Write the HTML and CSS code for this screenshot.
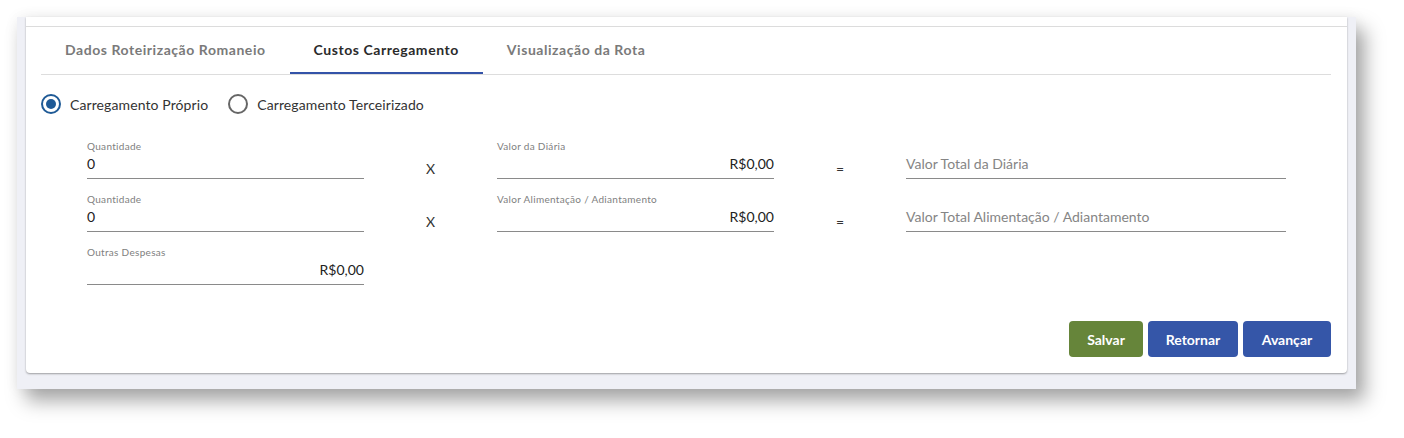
FILE: index.html
```html
<!DOCTYPE html>
<html lang="pt-BR">
<head>
  <meta charset="UTF-8" />
  <title>Custos Carregamento</title>
  <link rel="stylesheet" href="styles.css">
</head>
<body>
  <div class="frame">
    <div class="card">
      <nav class="tabs">
        <a class="tab">Dados Roteirização Romaneio</a>
        <a class="tab active">Custos Carregamento</a>
        <a class="tab">Visualização da Rota</a>
      </nav>

      <div class="radios">
        <label class="radio checked"><span class="dot"></span>Carregamento Próprio</label>
        <label class="radio"><span class="dot"></span>Carregamento Terceirizado</label>
      </div>

      <div class="costs">
        <div class="field">
          <span class="label">Quantidade</span>
          <span class="value">0</span>
        </div>
        <span class="op">X</span>
        <div class="field">
          <span class="label">Valor da Diária</span>
          <span class="value money">R$0,00</span>
        </div>
        <span class="op">=</span>
        <div class="field">
          <span class="label"></span>
          <span class="value placeholder">Valor Total da Diária</span>
        </div>

        <div class="field">
          <span class="label">Quantidade</span>
          <span class="value">0</span>
        </div>
        <span class="op">X</span>
        <div class="field">
          <span class="label">Valor Alimentação / Adiantamento</span>
          <span class="value money">R$0,00</span>
        </div>
        <span class="op">=</span>
        <div class="field">
          <span class="label"></span>
          <span class="value placeholder">Valor Total Alimentação / Adiantamento</span>
        </div>

        <div class="field">
          <span class="label">Outras Despesas</span>
          <span class="value money">R$0,00</span>
        </div>
      </div>

      <div class="actions">
        <button class="btn save">Salvar</button>
        <button class="btn back">Retornar</button>
        <button class="btn">Avançar</button>
      </div>
    </div>
  </div>
</body>
</html>
```

FILE: styles.css
```css
* {
  margin: 0;
  padding: 0;
  box-sizing: border-box;
}
body {
  font-family: Lato, "Open Sans", sans-serif;
  background: #fff;
  color: #333;
  padding: 17px 48px 40px 17px;
}

/* outer window */
.frame {
  width: 1339px;
  background: #eff0f6;
  padding: 0 9px 16px 9px;
  box-shadow: 9px 12px 18px rgba(0,0,0,0.34), 0 0 14px rgba(0,0,0,0.06);
}
.card {
  background: #fff;
  padding: 9px 16px 16px 15px;
  border-radius: 0 0 4px 4px;
  box-shadow: 0 1px 2px rgba(0,0,0,0.35);
}
.card::before {
  content: "";
  display: block;
  height: 1px;
  background: #dcdcdc;
  margin: 0 -16px 0 -15px;
}

/* tabs */
.tabs {
  display: flex;
  border-bottom: 1px solid #ddd;
}
.tab {
  height: 47px;
  padding: 0 24px;
  display: flex;
  align-items: center;
  font-size: 14px;
  font-weight: 700;
  letter-spacing: 0.55px;
  color: #7a7a7a;
  border-bottom: 2px solid transparent;
}
.tab.active {
  color: #2b2b2b;
  border-bottom-color: #3453a8;
}

/* radios */
.radios {
  display: flex;
  gap: 20px;
  margin-top: 19px;
}
.radio {
  display: flex;
  align-items: center;
  gap: 9px;
  font-size: 14px;
  letter-spacing: 0.1px;
  color: #333;
}
.dot {
  width: 20px;
  height: 20px;
  border-radius: 50%;
  border: 2px solid #666;
  display: flex;
  align-items: center;
  justify-content: center;
}
.radio.checked .dot {
  border-color: #1f5a96;
}
.radio.checked .dot::after {
  content: "";
  width: 10px;
  height: 10px;
  border-radius: 50%;
  background: #1f5a96;
}

/* cost fields */
.costs {
  display: grid;
  grid-template-columns: 277px 133px 277px 132px 380px;
  row-gap: 14px;
  margin-top: 26px;
  padding-left: 46px;
}
.field {
  display: flex;
  flex-direction: column;
  border-bottom: 1px solid #8a8a8a;
  padding-bottom: 4px;
}
.label {
  height: 12px;
  line-height: 12px;
  font-size: 10px;
  letter-spacing: 0.3px;
  color: #808080;
  margin-bottom: 2px;
}
.value {
  font-size: 14px;
  line-height: 20px;
  color: #222;
}
.value.money {
  text-align: right;
}
.value.placeholder {
  color: #858585;
}
.op {
  align-self: end;
  text-align: center;
  font-size: 14px;
  line-height: 20px;
  color: #333;
}

/* buttons */
.actions {
  display: flex;
  justify-content: flex-end;
  gap: 5px;
  margin-top: 36px;
}
.btn {
  height: 36px;
  padding: 0 16px;
  border: none;
  border-radius: 4px;
  background: #3556a8;
  color: #fff;
  font-family: inherit;
  font-size: 14px;
  font-weight: 700;
  min-width: 88px;
}
.btn.save {
  background: #66853a;
  min-width: 74px;
}
.btn.back {
  min-width: 90px;
}
```
